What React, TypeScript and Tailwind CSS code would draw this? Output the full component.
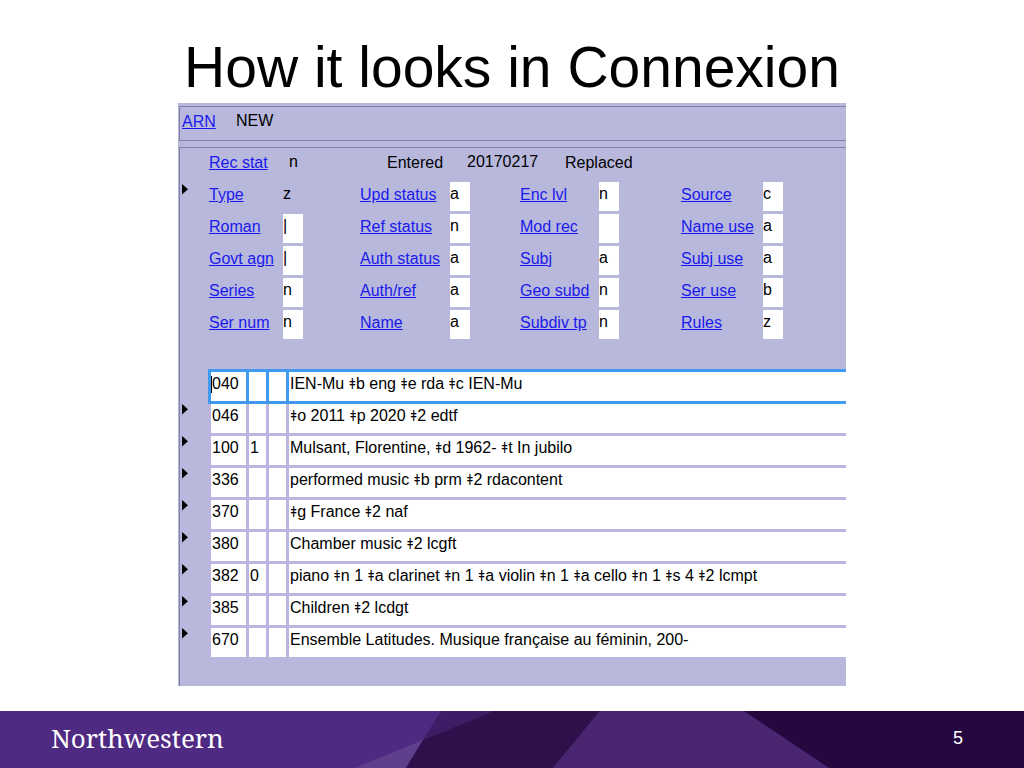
interface Field {
    label: string;
    value: string;
    editable?: boolean;
}

interface VariableField {
    tag: string;
    ind1?: string;
    ind2?: string;
    content: string;
    active?: boolean;
}

const fixedFields: Field[][] = [
    [
        { label: "Type", value: "z", editable: false },
        { label: "Upd status", value: "a" },
        { label: "Enc lvl", value: "n" },
        { label: "Source", value: "c" },
    ],
    [
        { label: "Roman", value: "|" },
        { label: "Ref status", value: "n" },
        { label: "Mod rec", value: "" },
        { label: "Name use", value: "a" },
    ],
    [
        { label: "Govt agn", value: "|" },
        { label: "Auth status", value: "a" },
        { label: "Subj", value: "a" },
        { label: "Subj use", value: "a" },
    ],
    [
        { label: "Series", value: "n" },
        { label: "Auth/ref", value: "a" },
        { label: "Geo subd", value: "n" },
        { label: "Ser use", value: "b" },
    ],
    [
        { label: "Ser num", value: "n" },
        { label: "Name", value: "a" },
        { label: "Subdiv tp", value: "n" },
        { label: "Rules", value: "z" },
    ],
];

const variableFields: VariableField[] = [
    { tag: "040", content: "IEN-Mu ǂb eng ǂe rda ǂc IEN-Mu", active: true },
    { tag: "046", content: "ǂo 2011 ǂp 2020 ǂ2 edtf" },
    { tag: "100", ind1: "1", content: "Mulsant, Florentine, ǂd 1962- ǂt In jubilo" },
    { tag: "336", content: "performed music ǂb prm ǂ2 rdacontent" },
    { tag: "370", content: "ǂg France ǂ2 naf" },
    { tag: "380", content: "Chamber music ǂ2 lcgft" },
    { tag: "382", ind1: "0", content: "piano ǂn 1 ǂa clarinet ǂn 1 ǂa violin ǂn 1 ǂa cello ǂn 1 ǂs 4 ǂ2 lcmpt" },
    { tag: "385", content: "Children ǂ2 lcdgt" },
    { tag: "670", content: "Ensemble Latitudes. Musique française au féminin, 200-" },
];

function RowMarker() {
    return (
        <svg className="block w-[6px] h-[11px]" viewBox="0 0 6 11" aria-hidden="true">
            <path d="M0 0L6 5.2L0 10.5Z" fill="#000" />
        </svg>
    );
}

function FieldLink({ id, label }: { id?: string; label: string }) {
    return (
        <a id={id} href="#" className="text-[#1a1aec] underline whitespace-nowrap leading-[26px]">
            {label}
        </a>
    );
}

function FieldPair({ label, value, editable = true }: Field) {
    const id = label.toLowerCase().replace(/\W/g, "-");

    return (
        <>
            <FieldLink id={id} label={label} />
            {editable ? (
                <input
                    aria-labelledby={id}
                    defaultValue={value}
                    maxLength={1}
                    className="block w-5 h-[29px] p-0 pb-1.5 bg-white outline-none"
                />
            ) : (
                <span className="leading-6">{value}</span>
            )}
        </>
    );
}

function FixedFields() {
    return (
        <div className="flex">
            <div className="w-[29px] shrink-0 pl-0.5 pt-[36px]">
                <RowMarker />
            </div>
            <div className="flex-1 pt-0.5">
                <div className="flex h-8">
                    <div className="w-20">
                        <FieldLink label="Rec stat" />
                    </div>
                    <span className="w-[98px] leading-6">n</span>
                    <span className="w-20 leading-[26px]">Entered</span>
                    <span className="w-[98px] leading-6">20170217</span>
                    <span className="leading-[26px]">Replaced</span>
                </div>
                <div className="grid grid-cols-[74fr_77fr_90fr_70fr_79fr_82fr_82fr_83fr] auto-rows-[32px] items-start">
                    {fixedFields.flat().map((field) => (
                        <FieldPair key={field.label} {...field} />
                    ))}
                </div>
            </div>
        </div>
    );
}

// The subfield delimiter is set smaller than the text around it
function SubfieldText({ text }: { text: string }) {
    return text.split(/(ǂ)/).map((part, i) =>
        part === "ǂ" ? (
            <span key={i} className="font-['Noto_Sans',sans-serif] text-sm leading-none">
                {part}
            </span>
        ) : (
            part
        )
    );
}

function VariableFields() {
    return (
        <table className="w-full table-fixed border-separate border-spacing-0 mt-[27px]">
            <colgroup>
                <col className="w-[28px]" />
                <col className="w-[41px]" />
                <col className="w-5" />
                <col className="w-5" />
                <col />
            </colgroup>
            <tbody>
                {variableFields.map(({ tag, ind1, ind2, content, active }) => {
                    const edge = active ? "border-t-3 border-[#4199f2]" : "border-[#bbb6df]";
                    const cell = `p-0 bg-white align-top leading-[23px] border-b-3 ${edge}`;

                    return (
                        <tr key={tag}>
                            <td className="p-0 pl-0.5 align-top">{!active && <RowMarker />}</td>
                            <td className={`${cell} border-x-3 h-8`}>
                                <div className="relative h-[29px] pl-px">
                                    {active && <span className="absolute left-0 top-1 h-[17px] w-px bg-black" />}
                                    {tag}
                                </div>
                            </td>
                            <td className={`${cell} border-r-3 pl-px`}>{ind1}</td>
                            <td className={`${cell} border-r-3 pl-px`}>{ind2}</td>
                            <td className={`${cell} pl-px whitespace-nowrap`}>
                                <SubfieldText text={content} />
                            </td>
                        </tr>
                    );
                })}
            </tbody>
        </table>
    );
}

function Footer() {
    return (
        <footer className="relative h-[57px] bg-[#4f2a82] text-white">
            <svg
                className="absolute inset-0 w-full h-full"
                viewBox="0 0 1024 57"
                preserveAspectRatio="none"
                aria-hidden="true"
            >
                <polygon points="355,57 423,29 406,57" fill="#5d3f8c" />
                <polygon points="441,0 494,0 423,29" fill="#3e1d66" />
                <polygon points="494,0 600,0 553,57 406,57 423,29" fill="#2e114b" />
                <polygon points="600,0 744,0 829,57 553,57" fill="#4a2671" />
                <polygon points="744,0 1024,0 1024,57 829,57" fill="#250840" />
            </svg>
            <div className="relative flex h-full items-center justify-between pl-[51px] pr-[61px] pb-[3px]">
                <span className="font-['Noto_Serif','DejaVu_Serif_Condensed',serif] text-[26px] leading-8">
                    Northwestern
                </span>
                <span className="text-[18px] leading-6">5</span>
            </div>
        </footer>
    );
}

export default function App() {
    return (
        <div className="flex min-h-screen flex-col bg-white text-black font-['Liberation_Sans',Arial,sans-serif]">
            <h1 className="pt-[33px] pb-0.5 text-center text-[57px] leading-[68px]">How it looks in Connexion</h1>

            <main className="mx-[178px] bg-[#b8b8dc] pt-[3px] pl-px text-base">
                <header className="flex h-[35px] border-y border-l border-[#7f7fa8] pl-0.5">
                    <div className="w-[54px] pt-0.5">
                        <FieldLink label="ARN" />
                    </div>
                    <span className="leading-[27px]">NEW</span>
                </header>

                <section className="mt-1.5 border-t border-l border-[#7f7fa8] pb-[26px]">
                    <FixedFields />
                    <VariableFields />
                </section>
            </main>

            <div className="flex-1" />
            <Footer />
        </div>
    );
}
